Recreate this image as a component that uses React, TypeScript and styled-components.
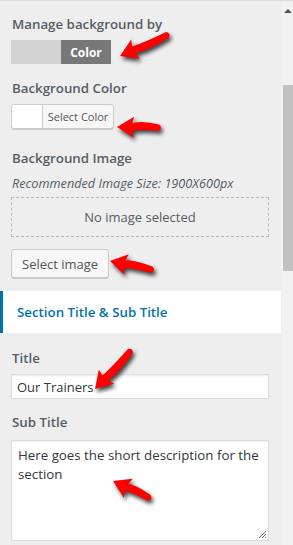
import styled, { createGlobalStyle } from "styled-components";

const GlobalStyle = createGlobalStyle`
  html, body {
    margin: 0;
    padding: 0;
    background: #eeeeee;
  }
  * { box-sizing: border-box; }
`;

const Page = styled.div`
  position: relative;
  display: flex;
  width: 293px;
  height: 545px;
  overflow: hidden;
  background: #eeeeee;
  border-top: 1px solid #dcdcdc;
  font-family: "Open Sans", "Noto Sans", sans-serif;
  color: #555d66;
`;

const Panel = styled.div`
  width: 281px;
  padding-top: 13px;
  display: flex;
  flex-direction: column;
`;

const Field = styled.div`
  padding: 0 12px 0 11px;
  display: flex;
  flex-direction: column;
  align-items: flex-start;
`;

const Label = styled.div<{ $top?: number }>`
  margin-top: ${(p) => p.$top ?? 0}px;
  padding-left: 1px;
  height: 20px;
  line-height: 20px;
  font-size: 13.3px;
  font-weight: 600;
  color: #555d66;
  white-space: nowrap;
`;

const Toggle = styled.div`
  margin-top: 6px;
  display: flex;
  width: 100px;
  height: 24px;
`;

const ToggleHalf = styled.div<{ $on?: boolean }>`
  flex: 1;
  display: flex;
  align-items: center;
  justify-content: center;
  background: ${(p) => (p.$on ? "#787878" : "#d3d3d3")};
  color: #fff;
  font-size: 12px;
  font-weight: 700;
`;

const ColorButton = styled.div`
  margin-top: 6px;
  display: flex;
  height: 25px;
  width: 103px;
  border: 1px solid #cccccc;
  border-radius: 3px;
  background: #f7f7f7;
  overflow: hidden;
  box-shadow: 0 1px 0 #cccccc;
`;

const Swatch = styled.div`
  width: 31px;
  background: #ffffff;
  border-right: 1px solid #cccccc;
`;

const ColorText = styled.div`
  flex: 1;
  display: flex;
  align-items: center;
  justify-content: center;
  font-size: 11px;
  color: #555555;
`;

const Hint = styled.div`
  margin-top: 6px;
  padding-left: 1px;
  height: 18px;
  line-height: 18px;
  font-size: 12.7px;
  font-style: italic;
  color: #555d66;
  white-space: nowrap;
`;

const Placeholder = styled.div`
  margin-top: 5px;
  width: 258px;
  height: 40px;
  border: 1px dashed #b4b9be;
  display: flex;
  align-items: center;
  justify-content: center;
  font-size: 13px;
  color: #555d66;
`;

const Button = styled.div`
  margin-top: 12px;
  height: 29px;
  padding: 0 10px;
  display: flex;
  align-items: center;
  border: 1px solid #cccccc;
  border-radius: 3px;
  background: #f7f7f7;
  box-shadow: 0 1px 0 #cccccc;
  font-size: 13px;
  color: #555555;
`;

const SectionHeader = styled.div`
  margin-top: 13px;
  height: 42px;
  background: #ffffff;
  border-left: 3px solid #0073aa;
  padding-left: 14px;
  display: flex;
  align-items: center;
  font-size: 13.3px;
  font-weight: 600;
  color: #0073aa;
`;

const Input = styled.div`
  margin-top: 6px;
  width: 258px;
  height: 25px;
  background: #ffffff;
  border: 1px solid #dddddd;
  box-shadow: inset 0 1px 2px rgba(0, 0, 0, 0.07);
  padding: 0 5px;
  display: flex;
  align-items: center;
  font-size: 13px;
  color: #32373c;
`;

const TextArea = styled.div`
  position: relative;
  margin-top: 8px;
  width: 258px;
  height: 101px;
  background: #ffffff;
  border: 1px solid #dddddd;
  box-shadow: inset 0 1px 2px rgba(0, 0, 0, 0.07);
  padding: 5px 6px;
  font-size: 13.3px;
  line-height: 19px;
  color: #32373c;
`;

const Grip = styled.svg`
  position: absolute;
  right: 1px;
  bottom: 1px;
`;

const Scrollbar = styled.div`
  width: 12px;
  background: #f1f1f1;
  display: flex;
  flex-direction: column;
  align-items: flex-end;
`;

const ScrollArrow = styled.div`
  margin: 8px 1px 0 0;
  width: 0;
  height: 0;
  border-left: 4px solid transparent;
  border-right: 4px solid transparent;
  border-bottom: 4px solid #505050;
`;

const Thumb = styled.div`
  margin-top: 72px;
  width: 10px;
  height: 186px;
  background: #c1c1c1;
`;

const ArrowSvg = styled.svg`
  position: absolute;
  overflow: visible;
  filter: drop-shadow(2px 3px 2px rgba(0, 0, 0, 0.75));
  pointer-events: none;
`;

interface ArrowProps {
  x: number;
  y: number;
  len: number;
  angle: number;
  bend?: number;
}

// red hand-drawn marker arrow, tip at (x, y), tail pointing along angle
function Arrow({ x, y, len, angle, bend = 0 }: ArrowProps) {
  const L = len;
  const d = `M0 0 L17 -10.5 L15 -3.8 Q${L / 2} ${-4.5 + bend} ${L - 3} -3.2 Q${L + 1} 0 ${L - 3} 3.2 Q${L / 2} ${4.5 + bend} 15 3.8 L17 10.5 Z`;
  return (
    <ArrowSvg width={1} height={1} style={{ left: x, top: y }}>
      <path d={d} fill="#ff0000" transform={`rotate(${angle})`} />
    </ArrowSvg>
  );
}

function App() {
  return (
    <Page>
      <GlobalStyle />
      <Panel>
        <Field>
          <Label>Manage background by</Label>
          <Toggle>
            <ToggleHalf />
            <ToggleHalf $on>Color</ToggleHalf>
          </Toggle>

          <Label $top={14}>Background Color</Label>
          <ColorButton>
            <Swatch />
            <ColorText>Select Color</ColorText>
          </ColorButton>

          <Label $top={19}>Background Image</Label>
          <Hint>Recommended Image Size: 1900X600px</Hint>
          <Placeholder>No image selected</Placeholder>
          <Button>Select image</Button>
        </Field>

        <SectionHeader>Section Title &amp; Sub Title</SectionHeader>

        <Field>
          <Label $top={15}>Title</Label>
          <Input>Our Trainers</Input>

          <Label $top={13}>Sub Title</Label>
          <TextArea>
            Here goes the short description for the section
            <Grip width="9" height="9" viewBox="0 0 9 9">
              <path d="M1 8 L8 1 M4 8 L8 4 M7 8 L8 7" stroke="#777" strokeWidth="1" />
            </Grip>
          </TextArea>
        </Field>
      </Panel>

      <Scrollbar>
        <ScrollArrow />
        <Thumb />
      </Scrollbar>

      <Arrow x={120} y={55} len={55} angle={-24} bend={2} />
      <Arrow x={117} y={126} len={45} angle={1} bend={-3} />
      <Arrow x={110} y={260} len={46} angle={12} bend={-2} />
      <Arrow x={95} y={388} len={55} angle={-47} bend={2} />
      <Arrow x={113} y={480} len={43} angle={25} bend={-2} />
    </Page>
  );
}

export default App;
